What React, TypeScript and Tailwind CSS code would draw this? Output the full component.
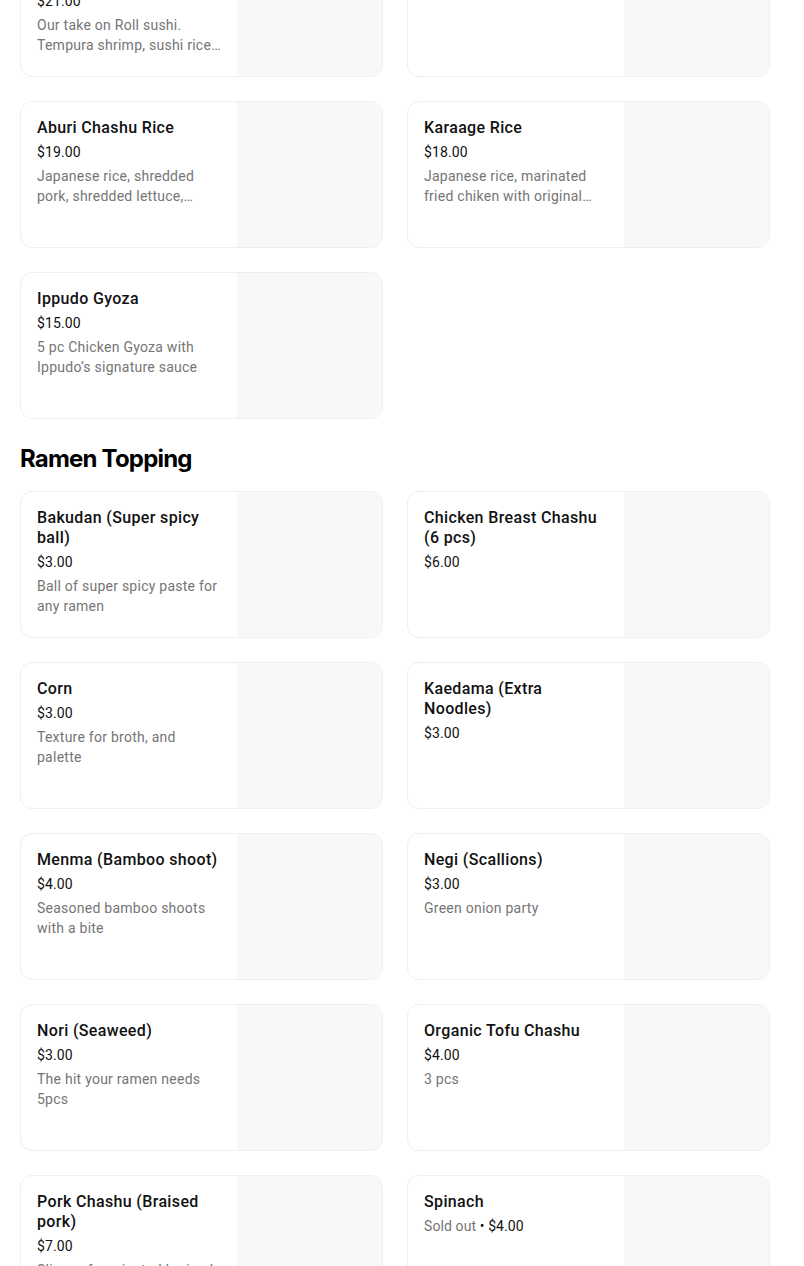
import React from "react";

type Item = { name: string; price: string; desc?: string; soldOut?: boolean };

const top: Item[] = [
  { name: "Ebi Tempura Roll Sushi (8 pieces)", price: "$21.00", desc: "Our take on Roll sushi. Tempura shrimp, sushi rice, cucumber, avocado and spicy mayo" },
  { name: "Chicken Karaage", price: "$14.00" },
  { name: "Aburi Chashu Rice", price: "$19.00", desc: "Japanese rice, shredded pork, shredded lettuce, green onion and special sauce" },
  { name: "Karaage Rice", price: "$18.00", desc: "Japanese rice, marinated fried chiken with original sauce and mayo" },
  { name: "Ippudo Gyoza", price: "$15.00", desc: "5 pc Chicken Gyoza with Ippudo\u2019s signature sauce" },
];

const toppings: Item[] = [
  { name: "Bakudan (Super spicy ball)", price: "$3.00", desc: "Ball of super spicy paste for any ramen" },
  { name: "Chicken Breast Chashu (6 pcs)", price: "$6.00" },
  { name: "Corn", price: "$3.00", desc: "Texture for broth, and palette" },
  { name: "Kaedama (Extra Noodles)", price: "$3.00" },
  { name: "Menma (Bamboo shoot)", price: "$4.00", desc: "Seasoned bamboo shoots with a bite" },
  { name: "Negi (Scallions)", price: "$3.00", desc: "Green onion party" },
  { name: "Nori (Seaweed)", price: "$3.00", desc: "The hit your ramen needs 5pcs" },
  { name: "Organic Tofu Chashu", price: "$4.00", desc: "3 pcs" },
  { name: "Pork Chashu (Braised pork)", price: "$7.00", desc: "Slices of marinated braised pork belly" },
  { name: "Spinach", price: "$4.00", soldOut: true },
];

function Card({ item }: { item: Item }) {
  return (
    <div className="flex h-[147px] overflow-hidden rounded-[12px] border border-[#efefef] bg-white">
      <div className="flex min-w-0 flex-1 flex-col pl-4 pr-4 pt-4">
        <div className="text-[16px] font-medium leading-[20px] tracking-[0.35px] text-[#111]">{item.name}</div>
        {item.soldOut ? (
          <div className="mt-1 text-[14px] leading-[20px] tracking-[0.1px]">
            <span className="text-[#757575]">Sold out</span>
            <span className="text-[#111]"> • {item.price}</span>
          </div>
        ) : (
          <div className="mt-1 text-[14px] leading-[20px] tracking-[0.1px] text-[#111]">{item.price}</div>
        )}
        {item.desc && (
          <div className="mt-1 line-clamp-2 text-[14px] leading-[20px] tracking-[0.25px] text-[#757575]">
            {item.desc}
          </div>
        )}
      </div>
      <div className="h-full w-[145px] shrink-0 bg-[#f8f8f8]" />
    </div>
  );
}

export default function App() {
  return (
    <div
      className="min-h-screen overflow-hidden bg-white"
      style={{ fontFamily: "Roboto, 'Noto Sans', sans-serif" }}
    >
      <div className="ml-5 mt-[-70px] w-[750px] pb-10">
        <div className="grid grid-cols-2 gap-6">
          {top.map((it) => (
            <Card key={it.name} item={it} />
          ))}
        </div>
        <h2
          className="mb-4 mt-[24px] text-[24px] font-bold leading-[32px] tracking-[-0.8px] text-black"
          style={{ fontFamily: "Inter, sans-serif" }}
        >
          Ramen Topping
        </h2>
        <div className="grid grid-cols-2 gap-6">
          {toppings.map((it) => (
            <Card key={it.name} item={it} />
          ))}
        </div>
      </div>
    </div>
  );
}
